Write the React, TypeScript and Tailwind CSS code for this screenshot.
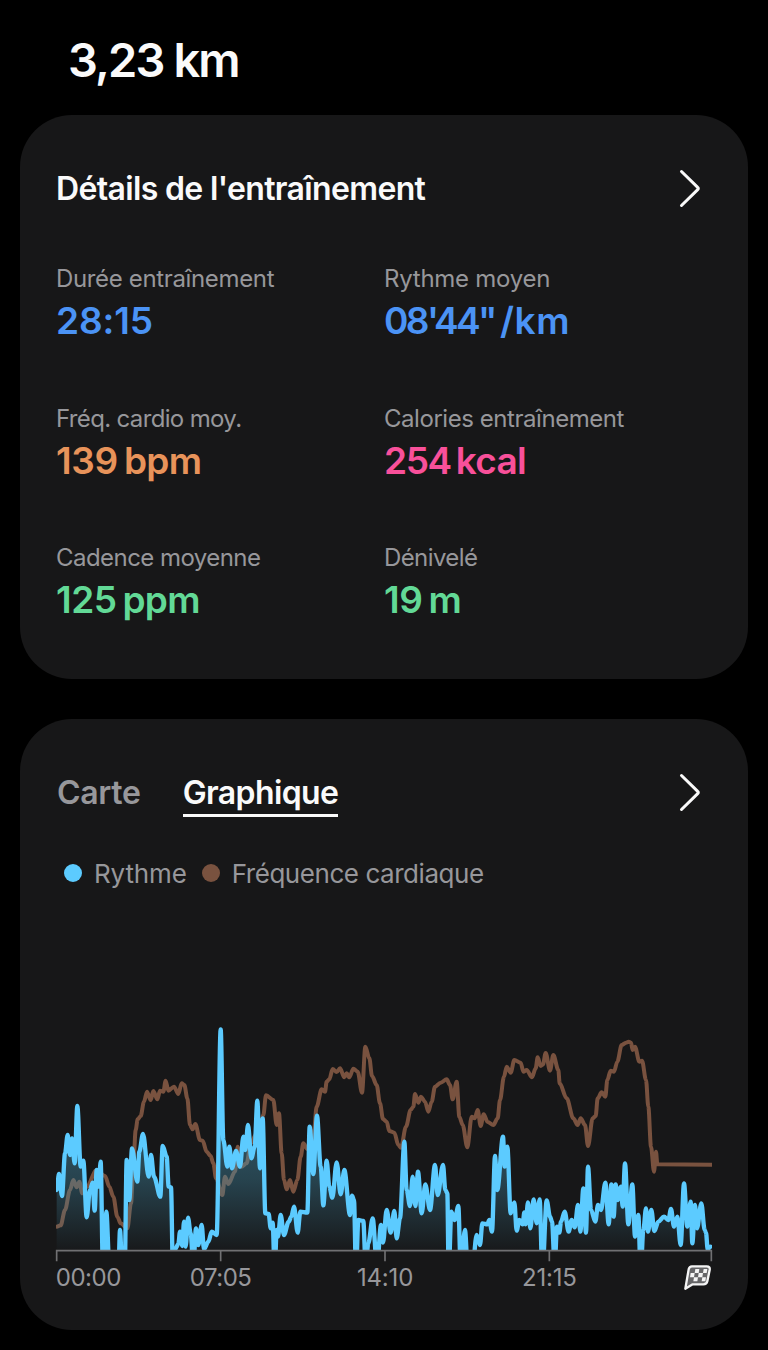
import React from 'react';

type Point = [number, number];

interface Metric {
  label: string;
  value: string;
  unit?: string;
  labelClass: string;
  valueClass: string;
  unitClass?: string;
}

const metrics: Metric[] = [
  {
    label: 'Durée entraînement',
    value: '28:15',
    labelClass: 'tracking-[-0.35px]',
    valueClass: 'text-[#4b93f5] tracking-[-0.1px]',
  },
  {
    label: 'Rythme moyen',
    value: `08'44"`,
    unit: '/km',
    labelClass: 'tracking-[-0.25px]',
    valueClass: 'text-[#4b93f5] tracking-[-2.6px]',
    unitClass: 'ml-[5px] tracking-[0.6px]',
  },
  {
    label: 'Fréq. cardio moy.',
    value: '139',
    unit: 'bpm',
    labelClass: 'tracking-[-0.65px]',
    valueClass: 'text-[#e8935a] tracking-[-0.3px]',
    unitClass: 'ml-1.5 tracking-[-0.7px]',
  },
  {
    label: 'Calories entraînement',
    value: '254',
    unit: 'kcal',
    labelClass: 'tracking-[-0.45px]',
    valueClass: 'text-[#f9509a] tracking-[-1.4px]',
    unitClass: 'ml-[5px] tracking-[-0.7px]',
  },
  {
    label: 'Cadence moyenne',
    value: '125',
    unit: 'ppm',
    labelClass: 'tracking-[-0.55px]',
    valueClass: 'text-[#62d996] tracking-[-0.5px]',
    unitClass: 'ml-1.5 tracking-[-0.7px]',
  },
  {
    label: 'Dénivelé',
    value: '19',
    unit: 'm',
    labelClass: 'tracking-[-0.6px]',
    valueClass: 'text-[#62d996] tracking-[-0.4px]',
    unitClass: 'ml-1.5',
  },
];

// Chart space: 3 units per pixel, baseline at 691. Points at 760 are below the axis and get clipped.
const BASELINE = 691;

const pace: Point[] = [
  [20, 510], [27, 462], [36, 528], [45, 400], [53, 345], [60, 405], [66, 355], [74, 430],
  [82, 258], [92, 440], [100, 422], [110, 592], [120, 510], [128, 488], [134, 572], [140, 450],
  [146, 500], [152, 425], [159, 760], [163, 760], [169, 575], [179, 760], [205, 760], [210, 630],
  [217, 760], [224, 760], [230, 420], [238, 540], [246, 385], [262, 485], [268, 395], [279, 342],
  [296, 470], [303, 405], [312, 470], [331, 530], [338, 378], [350, 410], [356, 500], [363, 502],
  [369, 760], [377, 685], [385, 672], [390, 635], [397, 678], [402, 605], [407, 680], [414, 593],
  [422, 640], [430, 740], [438, 625], [445, 675], [455, 615], [462, 688], [475, 665], [485, 635],
  [500, 645], [512, 28], [520, 360], [532, 440], [538, 380], [546, 445], [558, 393], [570, 440],
  [580, 350], [586, 390], [594, 315], [604, 415], [614, 380], [622, 242], [630, 445], [638, 295],
  [646, 580], [656, 582], [662, 625], [668, 608], [674, 760], [680, 630], [684, 650], [692, 585],
  [702, 645], [716, 605], [724, 590], [732, 560], [743, 638], [751, 575], [772, 578], [779, 320],
  [790, 462], [801, 287], [812, 440], [820, 556], [830, 422], [838, 500], [847, 533], [860, 427],
  [872, 523], [883, 450], [900, 585], [906, 527], [912, 540], [918, 760], [925, 600], [940, 603],
  [947, 740], [955, 670], [968, 595], [981, 740], [993, 615], [999, 668], [1010, 570], [1022, 638],
  [1033, 573], [1040, 655], [1050, 595], [1063, 365], [1070, 510], [1080, 558], [1088, 470], [1096, 558],
  [1104, 455], [1115, 580], [1126, 493], [1140, 570], [1155, 435], [1163, 525], [1179, 435], [1186, 510],
  [1192, 520], [1196, 760], [1204, 575], [1214, 600], [1225, 558], [1232, 740], [1245, 630], [1254, 760],
  [1266, 760], [1280, 645], [1290, 675], [1297, 610], [1312, 613], [1318, 600], [1326, 635], [1335, 408],
  [1342, 510], [1359, 350], [1364, 440], [1372, 380], [1382, 580], [1393, 547], [1400, 632], [1408, 600],
  [1418, 613], [1423, 577], [1427, 613], [1434, 547], [1441, 625], [1451, 538], [1460, 610], [1469, 538],
  [1477, 760], [1490, 541], [1500, 590], [1506, 605], [1514, 740], [1521, 620], [1528, 638], [1533, 605],
  [1544, 575], [1556, 635], [1565, 600], [1574, 622], [1584, 555], [1591, 635], [1600, 505], [1608, 638],
  [1614, 440], [1623, 570], [1636, 605], [1644, 555], [1653, 570], [1666, 488], [1676, 613], [1684, 493],
  [1691, 590], [1697, 493], [1703, 540], [1713, 500], [1718, 560], [1725, 430], [1735, 613], [1747, 493],
  [1755, 650], [1765, 585], [1772, 760], [1780, 630], [1788, 565], [1794, 635], [1804, 570], [1813, 633],
  [1825, 605], [1842, 590], [1855, 600], [1863, 567], [1872, 620], [1882, 590], [1892, 675], [1902, 490],
  [1912, 620], [1922, 545], [1927, 670], [1935, 555], [1941, 625], [1954, 550], [1964, 630], [1968, 638],
  [1973, 688], [1981, 680],
];

const heartRate: Point[] = [
  [20, 620], [32, 616], [45, 570], [60, 510], [70, 480], [80, 502], [88, 485], [97, 520],
  [110, 500], [140, 450], [165, 468], [178, 500], [190, 530], [202, 590], [212, 610], [232, 625],
  [243, 550], [250, 440], [257, 330], [263, 298], [272, 288], [282, 245], [291, 215], [302, 240],
  [310, 213], [322, 238], [330, 212], [340, 215], [347, 182], [355, 212], [372, 200], [385, 222],
  [395, 190], [403, 195], [412, 235], [420, 315], [428, 328], [436, 312], [450, 360], [458, 362],
  [470, 395], [482, 408], [490, 430], [498, 475], [517, 525], [525, 470], [535, 492], [555, 455],
  [563, 380], [574, 440], [590, 430], [602, 370], [620, 340], [632, 320], [640, 285], [648, 226],
  [670, 240], [680, 315], [687, 280], [695, 400], [702, 480], [710, 508], [720, 480], [730, 515],
  [742, 480], [752, 410], [760, 370], [772, 387], [784, 390], [792, 330], [800, 260], [815, 208],
  [825, 215], [830, 185], [838, 178], [848, 147], [860, 156], [870, 145], [883, 172], [890, 160],
  [898, 172], [910, 146], [923, 155], [936, 218], [946, 80], [958, 115], [966, 168], [980, 195],
  [990, 250], [999, 297], [1010, 305], [1018, 333], [1033, 338], [1045, 375], [1053, 383], [1068, 320],
  [1082, 270], [1090, 260], [1095, 222], [1105, 248], [1113, 230], [1125, 245], [1135, 275], [1145, 245],
  [1155, 200], [1172, 188], [1190, 178], [1200, 195], [1208, 238], [1220, 185], [1228, 290], [1238, 315],
  [1252, 382], [1265, 290], [1274, 295], [1283, 270], [1292, 318], [1301, 283], [1313, 306], [1330, 315],
  [1343, 295], [1350, 240], [1362, 170], [1370, 140], [1382, 158], [1393, 120], [1412, 128], [1420, 155],
  [1430, 150], [1446, 172], [1457, 145], [1463, 112], [1472, 138], [1479, 133], [1487, 99], [1500, 152],
  [1510, 105], [1525, 150], [1529, 190], [1550, 235], [1570, 295], [1583, 315], [1592, 295], [1605, 315],
  [1614, 378], [1628, 295], [1637, 288], [1643, 235], [1655, 217], [1666, 230], [1672, 180], [1682, 152],
  [1692, 155], [1702, 125], [1715, 75], [1728, 68], [1736, 65], [1743, 68], [1748, 90], [1755, 80],
  [1768, 125], [1776, 122], [1788, 180], [1795, 260], [1803, 380], [1812, 455], [1818, 395], [1822, 433],
  [1985, 434],
];

// Each segment leaves and enters its points horizontally, which rounds the peaks
const toCurve = (points: Point[]) =>
  points
    .map(([x, y], i) => {
      if (i === 0) return `M${x} ${y}`;
      const [px, py] = points[i - 1];
      // a third of the way in keeps the slopes from turning into steps
      const dx = (x - px) / 3;
      return `C${px + dx} ${py} ${x - dx} ${y} ${x} ${y}`;
    })
    .join(' ');

const pacePath = toCurve(pace);
const areaPath = `${pacePath} L1981 760 L20 760 Z`;
const heartPath = toCurve(heartRate);

const Chevron: React.FC = () => (
  <svg width="24" height="40" viewBox="0 0 24 40" fill="none" stroke="#fafafa" strokeWidth="3" strokeLinecap="round" strokeLinejoin="round">
    <path d="M3.5 3.5L19.7 19.4q1.2 1.1 0 2.2L3.5 37.5" />
  </svg>
);

const FinishFlag: React.FC = () => (
  <g>
    <path
      d="M1926 739H1970Q1981 739 1979 750L1972 784Q1970 793 1960 793H1928L1906 806L1916 748Q1918 739 1926 739Z"
      fill="#656567"
      stroke="#f4f4f4"
      strokeWidth="7"
      strokeLinejoin="round"
    />
    <g fill="#f4f4f4">
      <path d="M1936 747h12l-2 12h-12z" />
      <path d="M1961 747h11l-2 12h-11z" />
      <path d="M1922 759h12l-2 13h-12z" />
      <path d="M1946 759h13l-2 13h-13z" />
      <path d="M1932 772h12l-2 12h-12z" />
      <path d="M1957 772h11l-2 12h-11z" />
    </g>
  </g>
);

const WorkoutChart: React.FC = () => (
  <svg className="block" width="668" height="285" viewBox="0 0 2004 855">
    <defs>
      <linearGradient id="paceFill" gradientUnits="userSpaceOnUse" x1="0" y1="300" x2="0" y2={BASELINE}>
        <stop offset="0" stopColor="#4d9dbd" stopOpacity="0.48" />
        <stop offset="0.45" stopColor="#4596b5" stopOpacity="0.35" />
        <stop offset="1" stopColor="#4596b5" stopOpacity="0.02" />
      </linearGradient>
      <clipPath id="plot">
        <rect x="18" y="0" width="1968" height={BASELINE} />
      </clipPath>
    </defs>

    <g clipPath="url(#plot)" fill="none" strokeLinejoin="round" strokeLinecap="round">
      <path d={heartPath} stroke="#79523f" strokeWidth="12" />
      <path d={areaPath} fill="url(#paceFill)" />
      <path d={pacePath} stroke="#5ccbff" strokeWidth="13" />
    </g>

    {/* Time axis */}
    <path d="M20 724V692H1984V724M512 692V724M1005 692V724M1498 692V724" fill="none" stroke="#707072" strokeWidth="5" />
    <g fill="#97979b" fontSize="72" textAnchor="middle" letterSpacing="-1.5">
      <text x="115" y="799">00:00</text>
      <text x="512" y="799">07:05</text>
      <text x="1005" y="799" letterSpacing="-0.5">14:10</text>
      <text x="1498" y="799" letterSpacing="-0.5">21:15</text>
    </g>
    <FinishFlag />
  </svg>
);

export default function App() {
  return (
    <div className="h-[1350px] w-[768px] overflow-hidden bg-black px-5 font-['Inter',sans-serif] text-[#fafafa]">
      <h1 className="h-[115px] pt-[31px] pl-12 text-[47px] leading-[58px] font-semibold tracking-[-1.9px]">3,23 km</h1>

      {/* Workout details */}
      <section className="h-[564px] rounded-[52px] bg-[#171718] pt-[53px] pr-[46px] pl-9">
        <div className="flex h-10 items-center justify-between">
          <h2 className="pt-0.5 text-[32px] font-semibold tracking-[-0.65px]">Détails de l'entraînement</h2>
          <Chevron />
        </div>
        <div className="mt-[55px] grid grid-cols-[328px_1fr]">
          {metrics.map((m) => (
            <div key={m.label} className="h-[139.5px]">
              <p className={`text-[24px] leading-8 text-[#97979b] ${m.labelClass}`}>{m.label}</p>
              <p className={`flex text-[37px] leading-[51px] font-semibold ${m.valueClass}`}>
                <span>{m.value}</span>
                {m.unit && <span className={m.unitClass}>{m.unit}</span>}
              </p>
            </div>
          ))}
        </div>
      </section>

      {/* Map / chart */}
      <section className="mt-10 h-[611px] rounded-[52px] bg-[#171718] pt-[53px]">
        <div className="flex h-11 items-start justify-between pr-[46px] pl-[37px]">
          <div className="flex gap-[42px] text-[32px] leading-[41px] font-semibold">
            <span className="tracking-[-0.3px] text-[#97979b]">Carte</span>
            <span className="h-[45px] border-b-3 border-[#fafafa] tracking-[-0.6px]">Graphique</span>
          </div>
          <Chevron />
        </div>
        <div className="mt-[41px] flex h-8 items-center pl-11 text-[26px] text-[#97979b]">
          <span className="size-[18px] rounded-full bg-[#5ccbff]" />
          <span className="ml-3 tracking-[-0.15px]">Rythme</span>
          <span className="ml-[15px] size-[18px] rounded-full bg-[#79523f]" />
          <span className="ml-3 tracking-[-0.45px]">Fréquence cardiaque</span>
        </div>
        <div className="mt-[131px] pl-[30px]">
          <WorkoutChart />
        </div>
      </section>
    </div>
  );
}
